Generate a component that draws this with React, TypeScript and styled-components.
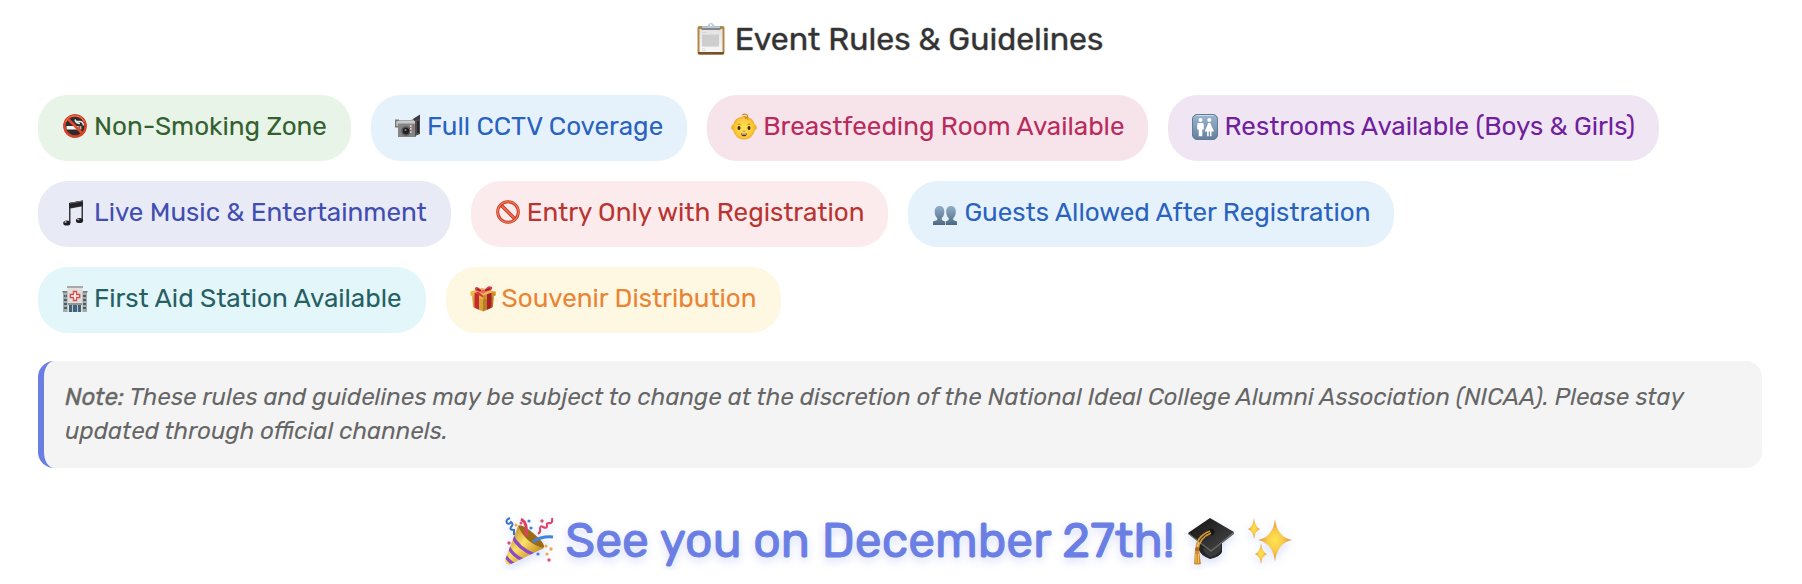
import React from "react";
import styled, { createGlobalStyle } from "styled-components";

const GlobalStyle = createGlobalStyle`
  * { box-sizing: border-box; }
  body {
    margin: 0;
    background: #ffffff;
    font-family: Rubik, Roboto, "Liberation Sans", sans-serif;
  }
`;

const Page = styled.main`
  padding: 16px 40px 0 38px;
`;

const Heading = styled.h2`
  display: flex;
  align-items: center;
  justify-content: center;
  gap: 10px;
  margin: 0 0 32px;
  color: #333333;
  font-size: 32px;
  font-weight: 400;
  line-height: 46px;
  padding-bottom: 1px;
  -webkit-text-stroke: 1px rgba(51, 51, 51, 0.4);
`;

const RuleList = styled.ul`
  display: flex;
  flex-wrap: wrap;
  gap: 20px;
  margin: 0;
  padding: 0;
  list-style: none;
`;

const Rule = styled.li<{ $bg: string; $fg: string }>`
  display: flex;
  align-items: center;
  gap: 6px;
  padding: 16px 24px 18px;
  border-radius: 30px;
  background: ${(p) => p.$bg};
  color: ${(p) => p.$fg};
  font-size: 26px;
  line-height: 32px;
`;

const Note = styled.p`
  margin: 28px 0 0;
  padding: 19px 20px 20px 21px;
  border-left: 6px solid #6a7ee4;
  border-radius: 16px;
  background: #f4f4f4;
  color: #666666;
  font-size: 24px;
  font-style: italic;
  line-height: 34px;
`;

const NoteLabel = styled.strong`
  font-weight: 400;
  -webkit-text-stroke: 1px rgba(102, 102, 102, 0.4);
`;

const Farewell = styled.p`
  display: flex;
  align-items: center;
  justify-content: center;
  gap: 12px;
  margin: 44px 0 0;
  color: #6a7ee4;
  font-size: 48px;
  font-weight: 400;
  line-height: 58px;
  text-shadow: 0 4px 8px rgba(102, 126, 234, 0.3);
  -webkit-text-stroke: 1px currentColor;
`;

const Icon = styled.svg<{ $w: number; $h: number }>`
  flex: none;
  width: ${(p) => p.$w}px;
  height: ${(p) => p.$h}px;
  overflow: visible;
`;

const ShadowIcon = styled(Icon)`
  filter: drop-shadow(0 4px 4px rgba(102, 126, 234, 0.25));
`;

const Clipboard = () => (
  <Icon $w={28} $h={32} viewBox="0 0 28 32" aria-hidden="true">
    <defs>
      <linearGradient id="paper" x1="0" y1="0" x2="0" y2="1">
        <stop offset="0" stopColor="#e2e2e2" />
        <stop offset="1" stopColor="#f8f8f8" />
      </linearGradient>
    </defs>
    <rect x="0.5" y="3" width="27" height="28.5" rx="2" fill="#b38644" />
    <rect x="1" y="29" width="26" height="2.5" rx="1" fill="#795026" />
    <rect x="2.5" y="6" width="23" height="23" fill="url(#paper)" />
    <path d="M5 9.5h5M5 25.8h3M5 27.5h4" stroke="#cfcfcf" strokeWidth="0.7" />
    <rect x="5" y="11.5" width="17" height="12" fill="#c6c6c6" opacity="0.8" />
    <path d="M4.5 4h19v3h-19z" fill="#84888c" />
    <path d="M5 3.2h5.5Q11.5 0 14 0t3.5 3.2H23V5H5z" fill="#bdcbd6" />
    <circle cx="14" cy="2.3" r="1" fill="#fff" />
  </Icon>
);

const NoSmoking = () => (
  <Icon $w={26} $h={26} viewBox="0 0 26 26" aria-hidden="true">
    <circle cx="13" cy="12" r="11.4" fill="#2c2c2c" />
    <path d="M4.5 12h12v3.5h-12z" fill="#f4f4f2" />
    <path d="M17.5 12h2v3.5h-2z" fill="#e6a077" />
    <path d="M13 7.5h5q3 0 3.5 4M13 5.5q1 4 5 4" stroke="#e5e5e5" strokeWidth="1.7" fill="none" />
    <path d="M5.5 4.5l15 15" stroke="#dc4a2f" strokeWidth="2.7" />
    <circle cx="13" cy="12" r="10.6" fill="none" stroke="#d84328" strokeWidth="2.5" />
    <path d="M3.5 8a10.5 10.5 0 0 1 19 0" fill="none" stroke="#f0785a" strokeWidth="1" />
  </Icon>
);

const Camera = () => (
  <Icon $w={26} $h={26} viewBox="0 0 26 26" aria-hidden="true">
    <path d="M1 6h15l5-3 4-1v4l-5 2v2H1z" fill="#a7a7a7" />
    <path d="M18 5l7-4.500v5l-5 2z" fill="#3c3c3e" />
    <path d="M0 5.5h4v8H0z" fill="#777" />
    <path d="M1.5 7h1.2v5H1.5z" fill="#ddd" />
    <path d="M3 9h18v14H3z" fill="#848484" />
    <path d="M3 7h17v2.5H3z" fill="#c9c9c9" />
    <path d="M20 6l5-1v15l-5 2z" fill="#4d4d50" />
    <path d="M22 7h2v12h-2z" fill="#29292b" />
    <circle cx="11" cy="17" r="4.8" fill="#5a5a5c" />
    <circle cx="11" cy="17" r="3.2" fill="#202024" />
    <circle cx="10.5" cy="16" r="1" fill="#7d8794" />
    <path d="M15 12h1.5M15 15h1.5M15 18h1.5" stroke="#e9e9e9" strokeWidth="1.5" />
    <path d="M18 12h1M18 15h1" stroke="#d63e35" strokeWidth="1.3" />
  </Icon>
);

const Baby = () => (
  <Icon $w={26} $h={26} viewBox="0 0 26 26" aria-hidden="true">
    <defs>
      <radialGradient id="face" cx="50%" cy="50%" r="55%">
        <stop offset="0" stopColor="#ffe05c" />
        <stop offset="0.7" stopColor="#fccb39" />
        <stop offset="1" stopColor="#e9a426" />
      </radialGradient>
    </defs>
    <ellipse cx="2.200" cy="13.500" rx="2" ry="2.800" fill="#f2b52e" />
    <ellipse cx="23.800" cy="13.500" rx="2" ry="2.800" fill="#f2b52e" />
    <path d="M13 2.500c7.500 0 11 5 11 11C24 21 19 25.500 13 25.500S2 21 2 13.500c0-6 3.500-11 11-11z" fill="url(#face)" />
    <path d="M11 1q4-2 5.500.500Q17 4 14 4.500M12.500 2.500q4 0 4.500 3" stroke="#cb8d24" strokeWidth="1.200" fill="none" />
    <ellipse cx="8" cy="14" rx="1.500" ry="1.900" fill="#3f2d18" />
    <ellipse cx="18" cy="14" rx="1.500" ry="1.900" fill="#3f2d18" />
    <path d="M6.500 10.500q1.500-1 3 0M16.500 10.500q1.500-1 3 0M11.800 17q1.200.8 2.400 0" stroke="#c08622" strokeWidth="0.900" fill="none" />
    <path d="M9.800 19.500h6.400q-.7 2.800-3.200 2.800t-3.200-2.800z" fill="#612f19" />
    <path d="M10.800 19.600h4.400v.9h-4.400z" fill="#fff" />
  </Icon>
);

const Restroom = () => (
  <Icon $w={26} $h={26} viewBox="0 0 26 26" aria-hidden="true">
    <defs>
      <linearGradient id="sign" x1="0" y1="0" x2="0" y2="1">
        <stop offset="0" stopColor="#9fb7d0" />
        <stop offset="1" stopColor="#637f9b" />
      </linearGradient>
    </defs>
    <rect x="0.500" y="0.500" width="25" height="25" rx="4.500" fill="url(#sign)" stroke="#607d99" />
    <path d="M4.500 1.500h17" stroke="#c9dae9" />
    <circle cx="8.500" cy="6" r="2" fill="#fff" />
    <path d="M6.700 9h3.600q1.500 0 1.500 1.500v5h-1.500v6.800H6.700v-6.800H5.200v-5Q5.200 9 6.700 9z" fill="#fff" />
    <circle cx="17.300" cy="6" r="2" fill="#fff" />
    <path d="M16.300 9h2l3.700 8.500h-2.500v4.800h-1.600v-4.800h-1.200v4.800h-1.600v-4.800h-2.500z" fill="#fff" />
  </Icon>
);

const Music = () => (
  <Icon $w={26} $h={26} viewBox="0 0 26 26" aria-hidden="true">
    <path d="M7 3l14-2.500v20h-1.500V6.500l-11 2V23H7z" fill="#3a3a3d" />
    <path d="M7 3l14-2.500v5L7 8z" fill="#242226" />
    <path d="M8 3.200L21 1" stroke="#6d6970" />
    <ellipse cx="4.800" cy="23" rx="3.600" ry="2.600" fill="#202023" />
    <ellipse cx="17.500" cy="20.500" rx="3.600" ry="2.600" fill="#202023" />
    <ellipse cx="3.600" cy="22" rx="1.200" ry="0.700" fill="#d5d5dc" />
    <ellipse cx="16.300" cy="19.500" rx="1.200" ry="0.700" fill="#b5b5bc" />
  </Icon>
);

const Prohibited = () => (
  <Icon $w={26} $h={26} viewBox="0 0 26 26" aria-hidden="true">
    <path d="M5.500 4.500l15 15" stroke="#c7391f" strokeWidth="3.400" />
    <path d="M5.500 4.500l15 15" stroke="#ec7255" strokeWidth="1.600" />
    <circle cx="13" cy="12" r="10.300" fill="none" stroke="#c83a20" strokeWidth="3" />
    <circle cx="13" cy="12" r="10.400" fill="none" stroke="#ee7658" strokeWidth="1.300" />
  </Icon>
);

const Guests = () => (
  <Icon $w={26} $h={26} viewBox="0 0 26 26" aria-hidden="true">
    <defs>
      <linearGradient id="bust" x1="0" y1="0" x2="0" y2="1">
        <stop offset="0" stopColor="#91adc8" />
        <stop offset="1" stopColor="#4f6982" />
      </linearGradient>
    </defs>
    <path
      d="M7.500 6c3.400 0 4.800 2.500 4.800 5.800 0 2.800-1 5.200-2.500 6.200v2l3.200 1.500V25H1v-3.500L5.200 20v-2c-1.500-1-2.500-3.400-2.500-6.200C2.700 8.500 4.100 6 7.500 6z"
      fill="url(#bust)"
    />
    <path
      d="M19 6c3.400 0 4.800 2.500 4.800 5.800 0 2.800-1 5.200-2.500 6.200v2l3.700 1.500V25H13.700v-3.500l3-1.500v-2c-1.500-1-2.500-3.400-2.500-6.200C14.200 8.500 15.600 6 19 6z"
      fill="url(#bust)"
    />
  </Icon>
);

const Hospital = () => (
  <Icon $w={26} $h={26} viewBox="0 0 26 26" aria-hidden="true">
    <path d="M1 6h24v20H1z" fill="#a9a9a6" />
    <path d="M.500 5h5v1.500h-5zM20.500 5h5v1.500h-5z" fill="#777" />
    <path d="M2 9h1.500v2H2zM4 9h1v2H4zM2 13h3v2H2zM2 17h3v2H2zM2 21h3v2H2zM21 9h3v2h-3zM21 13h3v2h-3zM21 17h3v2h-3zM21 21h3v2h-3z" fill="#436071" />
    <path d="M5.500 1h15v25h-15z" fill="#dfdfdc" />
    <path d="M5 0h16v2H5z" fill="#aaa" />
    <path d="M11.500 5.500h3v3h3.200v3h-3.200v3h-3v-3H8.300v-3h3.200z" fill="#fff" stroke="#dc4b4a" strokeWidth="1.400" />
    <path d="M6 17h14v2H6z" fill="#8e9698" />
    <path d="M7 19h12v7H7z" fill="#41647c" />
    <path d="M10.500 19v7M15.500 19v7" stroke="#b7c8d0" />
  </Icon>
);

const Gift = () => (
  <Icon $w={26} $h={26} viewBox="0 0 26 26" aria-hidden="true">
    <path d="M2 8l11 4v13.500L3 21z" fill="#d9a234" />
    <path d="M24 8l-11 4v13.500L23 21z" fill="#b87c24" />
    <path d="M.500 5.500L12 2l13.500 3.500v4L13 13.500.500 9.500z" fill="#e8b94a" />
    <path d="M13 9.500l12.500-4v4L13 13.500z" fill="#c98d2c" />
    <path d="M4.500 7l4.500 1.300v15.400l-4.500-2z" fill="#c42a34" />
    <path d="M4.500 7l4-1.200L13 9.500v2z" fill="#d73840" />
    <path d="M17 8.300l4.500-1.500v15l-4.500 2z" fill="#a81f2a" />
    <path d="M13 6Q7-1 5 2q-1 4 8 4zM13 6q5-8 9-5 2 4-9 5z" fill="#dd3f4c" />
    <path d="M7 3l5 2.500M14.500 5L20 2.500" stroke="#8f1824" strokeWidth="1.200" />
    <ellipse cx="13" cy="5.500" rx="2.500" ry="2" fill="#f0626b" />
  </Icon>
);

const PartyPopper = () => (
  <ShadowIcon $w={48} $h={48} viewBox="0 0 48 48" aria-hidden="true">
    <defs>
      <linearGradient id="cone" x1="0" y1="0" x2="1" y2="1">
        <stop offset="0.100" stopColor="#b98622" />
        <stop offset="0.450" stopColor="#fbe069" />
        <stop offset="0.800" stopColor="#c28c22" />
      </linearGradient>
      <clipPath id="coneClip">
        <path d="M13 9C18 20 27 29 39 31L6 47Q1 49 0 43z" />
      </clipPath>
    </defs>
    <path d="M13 9Q16 6 28 16T39 30Q37 34 26 26T13 9z" fill="#9d6a16" />
    <path d="M13 9C18 20 27 29 39 31L6 47Q1 49 0 43z" fill="url(#cone)" />
    <g clipPath="url(#coneClip)" fill="none" stroke="#8e49c4" strokeWidth="3.200">
      <path d="M7 18q6 14 23 20M3 29q5 10 15 14M0 38q3 6 9 9" />
    </g>
    <path d="M16 2q7 4 5 17" stroke="#dc4265" strokeWidth="3" fill="none" />
    <path d="M28 25q8-6 20-5" stroke="#4285dc" strokeWidth="3" fill="none" />
    <path d="M5 1q-5 2-3 5 2 2 4-1 3 2 0 5-2 3 3 3v5" stroke="#3971c8" strokeWidth="2" fill="none" />
    <path d="M47 1q1 6-3 5-3 0-2 3 0 3-4 1-3-2-3 2 1 3-2 5" stroke="#dd4269" strokeWidth="2" fill="none" />
    <g fill="#dd527d">
      <circle cx="37" cy="4" r="1.700" /><circle cx="16" cy="6" r="1.500" />
      <circle cx="4" cy="26" r="1.700" /><circle cx="44" cy="43" r="1.700" />
    </g>
    <g fill="#407fdc">
      <circle cx="24" cy="4" r="1.600" /><circle cx="26" cy="11" r="1.600" />
      <circle cx="33" cy="37" r="1.600" />
    </g>
    <g fill="#ecad40">
      <circle cx="11" cy="8" r="1.500" /><circle cx="41" cy="29" r="1.600" />
      <circle cx="46" cy="32" r="1.700" /><circle cx="42" cy="37" r="1.600" />
    </g>
  </ShadowIcon>
);

const GraduationCap = () => (
  <ShadowIcon $w={48} $h={48} viewBox="0 0 48 48" aria-hidden="true">
    <defs>
      <linearGradient id="board" x1="0" y1="0" x2="1" y2="1">
        <stop offset="0" stopColor="#111" />
        <stop offset="1" stopColor="#4b4b4b" />
      </linearGradient>
    </defs>
    <path d="M12 23l23 3v9q-2 5-12 7-10-4-11-9z" fill="#252525" />
    <path d="M16 31q8 3 18-5v7q-4 6-11 7-6-3-7-9z" fill="#3b3b3b" />
    <path d="M23 1l24 14-23 19L1 16z" fill="url(#board)" />
    <path d="M1 16l23 17 23-18v2L24 35 1 17z" fill="#656565" />
    <ellipse cx="24" cy="15" rx="3.500" ry="3.200" fill="#161616" />
    <path d="M23 14Q8 20 9.500 34M24 16q-12 5-13 17" stroke="#d99a32" strokeWidth="1.800" fill="none" />
    <path d="M8 33h4l2 14q-4 1-7 0z" fill="#cf8d2c" />
    <path d="M9 37v9M11.500 37v9" stroke="#f4c266" />
    <circle cx="10" cy="32" r="2" fill="#a96b1e" />
  </ShadowIcon>
);

const Sparkles = () => (
  <ShadowIcon $w={48} $h={48} viewBox="0 0 48 48" aria-hidden="true">
    <defs>
      <radialGradient id="spark">
        <stop offset="0" stopColor="#ffe650" />
        <stop offset="0.450" stopColor="#f8cc48" />
        <stop offset="1" stopColor="#e08a4c" />
      </radialGradient>
    </defs>
    <g fill="url(#spark)">
      <path d="M28 2q2 18 17 21-15 3-17 22-2-19-17-22Q26 20 28 2z" />
      <path d="M7 1q1 9 6 11-5 2-6 10-1-8-6-10 5-2 6-11z" />
      <path d="M14 26q1 9 6 11-5 2-6 10-1-8-6-10 5-2 6-11z" />
    </g>
  </ShadowIcon>
);

const rules = [
  { icon: <NoSmoking />, text: "Non-Smoking Zone", bg: "#e8f4e8", fg: "#33602e" },
  { icon: <Camera />, text: "Full CCTV Coverage", bg: "#e5f2fc", fg: "#2962bf" },
  { icon: <Baby />, text: "Breastfeeding Room Available", bg: "#f7e4eb", fg: "#b82b5c" },
  { icon: <Restroom />, text: "Restrooms Available (Boys & Girls)", bg: "#f0e5f3", fg: "#70209c" },
  { icon: <Music />, text: "Live Music & Entertainment", bg: "#e8eaf6", fg: "#414db0" },
  { icon: <Prohibited />, text: "Entry Only with Registration", bg: "#fcebed", fg: "#b93430" },
  { icon: <Guests />, text: "Guests Allowed After Registration", bg: "#e5f2fc", fg: "#2962bf" },
  { icon: <Hospital />, text: "First Aid Station Available", bg: "#e3f6fa", fg: "#265f64" },
  { icon: <Gift />, text: "Souvenir Distribution", bg: "#fef7e1", fg: "#ea8435" },
];

export default function App() {
  return (
    <>
      <GlobalStyle />
      <Page>
        <Heading>
          <Clipboard />
          <span>Event Rules &amp; Guidelines</span>
        </Heading>
        <RuleList>
          {rules.map((rule) => (
            <Rule key={rule.text} $bg={rule.bg} $fg={rule.fg}>
              {rule.icon}
              <span>{rule.text}</span>
            </Rule>
          ))}
        </RuleList>
        <Note>
          <NoteLabel>Note:</NoteLabel> These rules and guidelines may be subject to change at the
          discretion of the National Ideal College Alumni Association (NICAA). Please stay updated
          through official channels.
        </Note>
        <Farewell>
          <PartyPopper />
          <span>See you on December 27th!</span>
          <GraduationCap />
          <Sparkles />
        </Farewell>
      </Page>
    </>
  );
}
